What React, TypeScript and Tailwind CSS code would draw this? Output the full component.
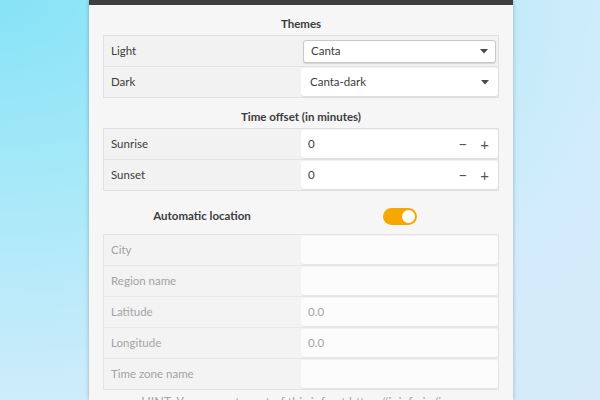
const themes = [
  { label: 'Light', value: 'Canta', focused: true },
  { label: 'Dark', value: 'Canta-dark', focused: false },
]

const offsets = [
  { label: 'Sunrise', value: '0' },
  { label: 'Sunset', value: '0' },
]

const location = [
  { label: 'City', value: '' },
  { label: 'Region name', value: '' },
  { label: 'Latitude', value: '0.0' },
  { label: 'Longitude', value: '0.0' },
  { label: 'Time zone name', value: '' },
]

function Caret() {
  return (
    <svg width="8" height="5" viewBox="0 0 8 5" className="ml-auto">
      <path d="M0 0 L8 0 L4 4.5 Z" fill="#4a4a4a" />
    </svg>
  )
}

export default function App() {
  return (
    <div
      className="flex h-[400px] w-[600px] overflow-hidden bg-[radial-gradient(ellipse_at_0%_0%,#86e3f6_0%,#a9e9f9_35%,#d3ecfb_75%,#d6eaf9_100%)] text-[11.5px] text-[#3c3c3c]"
      style={{ fontFamily: 'Lato, "Noto Sans", sans-serif' }}
    >
      <div className="ml-[89px] flex h-[400px] w-[424px] shrink-0 flex-col bg-[#f6f6f6] shadow-[0_0_4px_rgba(0,0,0,0.25)]">
        <div className="h-[5px] shrink-0 bg-[#3d403d]" />
        <div className="flex shrink-0 flex-col px-[14px]">
          <h2 className="mt-[11px] text-center font-bold leading-[16px]">Themes</h2>
          <div className="mt-[3px] flex flex-col gap-px border border-[#e0e0e0] bg-[#e3e3e3]">
            {themes.map((t) => (
              <div key={t.label} className="grid h-[30px] grid-cols-2 items-center bg-[#f2f2f2]">
                <span className="pl-[7px]">{t.label}</span>
                {t.focused ? (
                  <div className="mx-[2px] flex h-[23px] items-center rounded-[3px] border border-[#c9c9c9] bg-white px-[7px] shadow-[0_1px_1px_rgba(0,0,0,0.12)]">
                    <span>{t.value}</span>
                    <Caret />
                  </div>
                ) : (
                  <div className="flex h-[28px] items-center rounded-[3px] bg-white px-[9px] shadow-[0_1px_1px_rgba(0,0,0,0.08)]">
                    <span>{t.value}</span>
                    <Caret />
                  </div>
                )}
              </div>
            ))}
          </div>

          <h2 className="mt-[11px] text-center font-bold leading-[16px]">Time offset (in minutes)</h2>
          <div className="mt-[3px] flex flex-col gap-px border border-[#e0e0e0] bg-[#e3e3e3]">
            {offsets.map((o) => (
              <div key={o.label} className="grid h-[30px] grid-cols-2 items-center bg-[#f2f2f2]">
                <span className="pl-[7px]">{o.label}</span>
                <div className="flex h-[28px] items-center rounded-[3px] bg-white pl-[7px] pr-[9px] shadow-[0_1px_1px_rgba(0,0,0,0.08)]">
                  <span>{o.value}</span>
                  <span className="ml-auto text-[15px] text-[#555]">−</span>
                  <span className="ml-[13px] text-[15px] text-[#555]">+</span>
                </div>
              </div>
            ))}
          </div>

          <div className="mt-[14px] grid h-[22px] grid-cols-2 items-center">
            <span className="text-center font-bold">Automatic location</span>
            <div className="flex justify-center">
              <div className="flex h-[17px] w-[34px] items-center justify-end rounded-full bg-[#f6a800] pr-[2px]">
                <div className="h-[13px] w-[13px] rounded-full bg-white" />
              </div>
            </div>
          </div>

          <div className="mt-[7px] flex flex-col gap-px border border-[#e4e4e4] bg-[#e7e7e7] text-[#a3a3a3]">
            {location.map((l) => (
              <div key={l.label} className="grid h-[30px] grid-cols-2 items-center bg-[#f3f3f3]">
                <span className="pl-[7px]">{l.label}</span>
                <div className="flex h-[28px] items-center rounded-[3px] bg-[#fcfcfc] px-[7px] shadow-[0_1px_1px_rgba(0,0,0,0.06)]">
                  {l.value}
                </div>
              </div>
            ))}
          </div>

          <p className="mt-[5px] whitespace-nowrap text-center text-[12.5px] leading-[16px] text-[#a6a6a6]">
            HINT: You can get most of this info at https://ipinfo.io/json
          </p>
        </div>
      </div>
    </div>
  )
}
